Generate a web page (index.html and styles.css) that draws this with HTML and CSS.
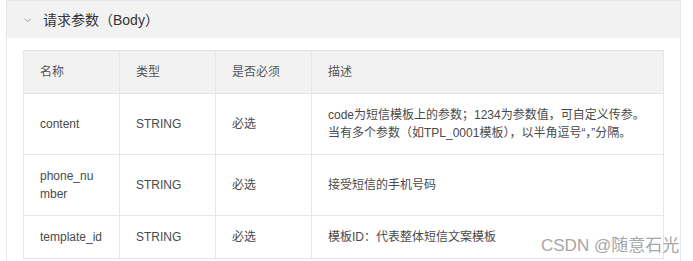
FILE: index.html
```html
<!DOCTYPE html>
<html lang="zh">
<head>
<meta charset="utf-8">
<link rel="stylesheet" href="styles.css">
</head>
<body>
<div class="panel">
  <div class="panel-head">
    <svg class="chev" width="7" height="5" viewBox="0 0 7 5"><path d="M0.5 0.8 L3.5 3.8 L6.5 0.8" fill="none" stroke="#8a9bb0" stroke-width="1"/></svg>
    <span class="title">请求参数（Body）</span>
  </div>
  <div class="panel-body">
    <table class="params">
      <colgroup>
        <col class="c1"><col class="c2"><col class="c3"><col class="c4">
      </colgroup>
      <thead>
        <tr><th>名称</th><th>类型</th><th>是否必须</th><th>描述</th></tr>
      </thead>
      <tbody>
        <tr><td>content</td><td>STRING</td><td>必选</td><td>code为短信模板上的参数；1234为参数值，可自定义传参。<br>当有多个参数（如TPL_0001模板），以半角逗号“，”分隔。</td></tr>
        <tr><td class="brk">phone_number</td><td>STRING</td><td>必选</td><td>接受短信的手机号码</td></tr>
        <tr><td>template_id</td><td>STRING</td><td>必选</td><td>模板ID：代表整体短信文案模板</td></tr>
      </tbody>
    </table>
  </div>
</div>
<div class="watermark">CSDN @随意石光</div>
</body>
</html>
```
FILE: styles.css
```css
html, body {
  margin: 0;
  padding: 0;
  background: #fff;
  font-family: "Liberation Sans", "Noto Sans CJK SC", sans-serif;
  color: #444;
  overflow: hidden;
}
.panel {
  margin-left: 6px;
  width: 673px;
  border: 1px solid #e6e6e6;
  border-bottom: none;
  height: 270px;
}
.panel-head {
  height: 37px;
  background: #f2f2f2;
  display: flex;
  align-items: center;
  padding-left: 17px;
}
.chev {
  display: block;
  margin-right: 12px;
  margin-top: 1px;
}
.title {
  font-size: 14px;
  color: #333;
  line-height: 18px;
}
.panel-body {
  padding: 12px 16px 0 16px;
}
.params {
  width: 641px;
  border-collapse: collapse;
  table-layout: fixed;
  font-size: 12px;
  line-height: 18px;
}
.params col.c1, .params col.c2, .params col.c3 { width: 96px; }
.params th, .params td {
  border: 1px solid #e6e6e6;
  padding: 12px 18px 12px 16px;
  text-align: left;
  font-weight: normal;
  vertical-align: middle;
  white-space: nowrap;
  color: #4a4a4a;
}
.params td:last-child { white-space: normal; }
.params td.brk {
  white-space: normal;
  word-break: break-all;
}
.params th {
  background: #f2f2f2;
  color: #555;
}
.watermark {
  position: absolute;
  left: 541px;
  top: 236px;
  font-size: 17px;
  line-height: 20px;
  color: #a6a6a6;
  white-space: nowrap;
}
```
